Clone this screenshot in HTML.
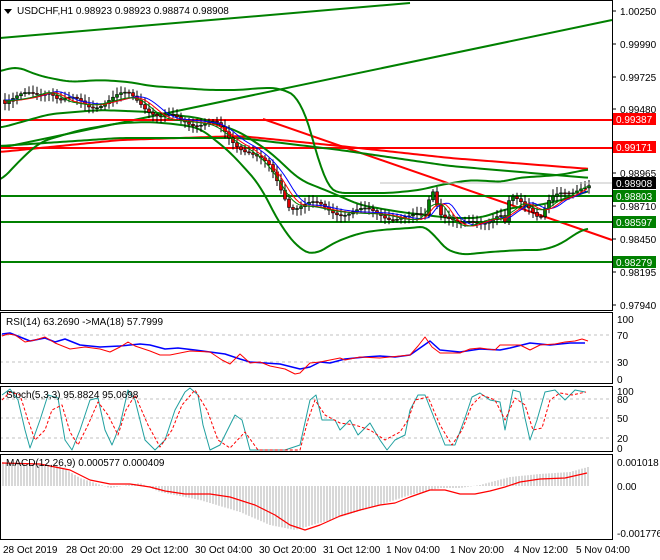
<!DOCTYPE html>
<html><head><meta charset="utf-8"><style>
body{margin:0;background:#fff;width:660px;height:560px;overflow:hidden}
svg{display:block}
text{font-family:"Liberation Sans",sans-serif;font-size:10px;fill:#000}
</style></head><body>
<svg id="s" width="660" height="560" xmlns="http://www.w3.org/2000/svg">
<rect width="660" height="560" fill="#fff"/>
<g id="main"></g>
<g stroke="#000" fill="none" stroke-width="1">
<rect x="0.5" y="0.5" width="612" height="310"/>
<rect x="0.5" y="312.5" width="612" height="71"/>
<rect x="0.5" y="386.5" width="612" height="65"/>
<rect x="0.5" y="454.5" width="612" height="85"/>
</g>
<g>
<path d="M4 9 L12 9 L8 14Z" fill="#000"/>
<text x="17" y="14">USDCHF,H1  0.98923 0.98923 0.98874 0.98908</text>
<text x="6" y="325">RSI(14) 63.2690  -&gt;MA(18) 57.7999</text>
<text x="6" y="398">Stoch(5,3,3) 95.8824 95.0698</text>
<text x="6" y="466">MACD(12,26,9) 0.000577 0.000409</text>
</g>
<g id="axis"></g>
<g>
<text x="3" y="553">28 Oct 2019</text><text x="66" y="553">28 Oct 20:00</text><text x="131" y="553">29 Oct 12:00</text><text x="195" y="553">30 Oct 04:00</text><text x="259" y="553">30 Oct 20:00</text><text x="323" y="553">31 Oct 12:00</text><text x="386" y="553">1 Nov 04:00</text><text x="450" y="553">1 Nov 20:00</text><text x="514" y="553">4 Nov 12:00</text><text x="576" y="553">5 Nov 04:00</text>
</g>
</svg>
<script>
const NS="http://www.w3.org/2000/svg",M=document.getElementById('main');
function el(t,a,p){const e=document.createElementNS(NS,t);for(const k in a)e.setAttribute(k,a[k]);(p||M).appendChild(e);return e;}
function pl(pts,c,w,extra){const a={points:pts.map(p=>p.join(',')).join(' '),fill:'none',stroke:c,'stroke-width':w,'stroke-linejoin':'round'};Object.assign(a,extra||{});return el('polyline',a);}
function interp(k,x){for(let i=0;i<k.length-1;i++){if(x>=k[i][0]&&x<=k[i+1][0]){const t=(x-k[i][0])/(k[i+1][0]-k[i][0]);return k[i][1]+t*(k[i+1][1]-k[i][1]);}}return x<k[0][0]?k[0][1]:k[k.length-1][1];}
function smooth(k){const o=[];for(let x=k[0][0];x<=k[k.length-1][0];x+=3){let s=0,n=0;for(let d=-9;d<=9;d+=3){s+=interp(k,x+d);n++;}o.push([x,s/n]);}return o;}
pl([[0,38],[410,3]],'#008000',2);
pl([[0,148],[612,20]],'#008000',2);
pl([[0,120],[612,120]],'#ff0000',2);
pl([[0,148],[612,148]],'#ff0000',2);
pl([[263,119],[612,240]],'#ff0000',2);
pl(smooth([[0,152],[120,140],[240,136],[340,146],[450,158],[590,169]]),'#ff0000',2);
pl(smooth([[0,146],[120,138],[240,138],[340,150],[450,166],[590,178]]),'#008000',2);
pl([[0,196],[612,196]],'#008000',2);
pl([[0,222],[612,222]],'#008000',2);
pl([[0,262],[612,262]],'#008000',2);
pl(smooth([[0,72],[15,66],[40,76],[70,82],[100,80],[130,82],[150,86],[180,88],[210,90],[240,90],[260,88],[280,88],[300,98],[312,135],[325,185],[335,193],[360,193],[390,193],[420,190],[440,185],[470,180],[505,182],[515,178],[560,175],[580,171],[590,169]]),'#008000',2);
pl(smooth([[0,182],[20,160],[40,142],[80,130],[120,123],[150,122],[175,124],[200,128],[230,152],[260,185],[280,225],[300,250],[315,255],[335,242],[360,233],[380,230],[410,228],[430,226],[440,246],[460,255],[490,252],[520,250],[545,250],[565,242],[580,230],[590,228]]),'#008000',2);
pl(smooth([[0,128],[50,114],[100,110],[150,112],[200,118],[240,132],[270,152],[300,180],[330,192],[360,205],[400,212],[450,218],[480,218],[510,208],[540,205],[570,198],[590,190]]),'#008000',2);
const K=[[5,100],[20,98],[35,95],[50,88],[60,100],[75,102],[90,105],[110,100],[130,95],[140,100],[160,118],[200,122],[215,125],[230,140],[250,150],[270,170],[290,205],[310,205],[330,210],[350,212],[380,213],[410,220],[425,215],[432,185],[440,210],[460,228],[480,220],[500,215],[505,225],[510,200],[530,205],[540,215],[550,200],[570,195],[580,185],[590,182]];
let prev=interp(K,3),ma1=[],ma2=[],ma3=[];
for(let x=5;x<=590;x+=4){let c=interp(K,x)+Math.sin(x*1.7)*4.5,o=prev;const hi=Math.min(o,c)-2-Math.abs(Math.sin(x*.9))*5,lo=Math.max(o,c)+2+Math.abs(Math.cos(x*.7))*5;
el('line',{x1:x,y1:hi,x2:x,y2:lo,stroke:'#000','stroke-width':1});
const up=c<o;el('rect',{x:x-1.5,y:Math.min(o,c),width:3,height:Math.max(1,Math.abs(o-c)),fill:up?'#008000':'#e00000',stroke:'#000','stroke-width':0.6});
ma1.push([x,interp(K,x-4)+1]);ma2.push([x,interp(K,x-8)+1]);ma3.push([x,interp(K,x-12)]);prev=c;}
pl(smooth(ma3),'#0000ff',1);pl(smooth(ma2),'#ff0000',1);pl(smooth(ma1),'#008000',1);
const A=document.getElementById('axis');
[[11,'1.00250'],[44,'0.99990'],[77,'0.99725'],[109,'0.99480'],[173,'0.98965'],[206,'0.98710'],[239,'0.98450'],[272,'0.98195'],[305,'0.97940']].forEach(t=>{el('line',{x1:612,y1:t[0],x2:616,y2:t[0],stroke:'#000'},A);const e=el('text',{x:620,y:t[0]+4},A);e.textContent=t[1];});
[[319,'100'],[335,'70'],[362,'30'],[379,'0'],[391,'100'],[399,'80'],[418,'50'],[438,'20'],[448,'0'],[462,'0.001018'],[486,'0.00'],[533,'-0.001776']].forEach(t=>{const e=el('text',{x:617,y:t[0]+4},A);e.textContent=t[1];});
pl([[380,183],[612,183]],'#c0c0c0',1);
[[119,'0.99387','#ff0000'],[147,'0.99171','#ff0000'],[183,'0.98908','#000'],[196,'0.98803','#008000'],[222,'0.98597','#008000'],[262,'0.98279','#008000']].forEach(l=>{el('rect',{x:613,y:l[0]-6,width:43,height:12,fill:l[2]},A);const e=el('text',{x:616,y:l[0]+4,style:'fill:#fff'},A);e.textContent=l[1];});
[335,362].forEach(y=>pl([[0,y],[612,y]],'#c0c0c0',1,{'stroke-dasharray':'3,3'}));
pl([[2,334],[10,333],[20,337],[30,341],[45,338],[55,342],[65,339],[80,345],[100,347],[120,346],[130,345],[140,344],[150,345],[165,349],[178,348],[195,350],[210,352],[225,354],[240,359],[250,362],[265,363],[280,364],[300,369],[310,367],[320,362],[330,363],[345,359],[365,357],[380,356],[395,357],[410,355],[420,348],[430,341],[440,350],[460,352],[480,349],[500,350],[510,348],[530,343],[550,345],[570,343],[585,343]],'#0000ff',1.5);
pl([[2,336],[8,334],[15,335],[25,342],[35,340],[45,337],[55,343],[70,349],[85,347],[100,349],[110,352],[120,347],[128,342],[135,346],[150,351],[160,355],[170,355],[190,351],[210,352],[222,360],[230,364],[240,354],[250,363],[260,362],[270,366],[285,369],[295,374],[300,373],[310,363],[320,362],[330,360],[340,358],[345,360],[360,357],[380,358],[400,356],[410,355],[418,346],[425,337],[432,347],[440,353],[460,353],[470,349],[480,348],[495,350],[500,345],[520,345],[530,350],[540,345],[555,344],[565,342],[575,341],[582,339],[588,341]],'#ff0000',1);
[399,418,438].forEach(y=>pl([[0,y],[612,y]],'#c0c0c0',1,{'stroke-dasharray':'3,3'}));
pl([[2,395],[10,389],[18,400],[25,430],[30,448],[40,420],[48,395],[58,398],[65,440],[72,450],[80,430],[90,400],[98,398],[105,430],[112,445],[120,425],[128,390],[135,400],[145,440],[155,450],[165,440],[175,410],[185,392],[190,388],[198,395],[203,425],[210,450],[220,445],[235,415],[242,420],[250,450],[265,450],[285,450],[300,445],[310,400],[316,395],[322,420],[335,420],[340,430],[350,420],[358,435],[370,423],[380,440],[387,450],[395,440],[405,435],[410,410],[418,395],[425,395],[435,420],[445,445],[455,445],[465,418],[472,397],[480,393],[490,400],[500,402],[505,430],[513,390],[520,392],[525,418],[530,440],[537,420],[545,392],[555,390],[565,400],[575,390],[585,392]],'#20a0a0',1);
pl([[2,400],[10,392],[20,395],[28,420],[35,440],[45,430],[52,410],[62,405],[70,432],[78,445],[88,425],[98,402],[108,415],[118,435],[126,410],[135,395],[148,425],[160,447],[172,430],[182,405],[195,390],[207,410],[218,440],[230,448],[245,432],[258,450],[300,450],[308,420],[315,400],[325,415],[340,423],[355,425],[370,430],[385,440],[400,432],[408,420],[415,400],[428,397],[440,425],[452,445],[462,430],[472,405],[482,395],[495,400],[505,420],[515,398],[525,405],[533,430],[542,428],[550,400],[560,393],[572,395],[586,392]],'#ff0000',1,{'stroke-dasharray':'3,2'});
for(let x=3;x<=588;x+=3){const v=interp([[0,462],[60,466],[80,478],[110,488],[140,483],[160,492],[200,500],[240,512],[270,525],[295,530],[330,520],[380,505],[410,495],[440,488],[460,488],[480,485],[510,477],[540,474],[570,472],[588,467]],x);
el('line',{x1:x,y1:486,x2:x,y2:v,stroke:'#b0b0b0','stroke-width':1});}
pl([[2,463],[40,464],[70,470],[90,480],[110,484],[130,484],[150,487],[165,491],[185,494],[210,494],[230,497],[255,505],[275,515],[290,525],[305,530],[320,525],[340,516],[360,510],[380,505],[395,503],[410,497],[430,490],[445,490],[460,494],[475,494],[490,491],[505,487],[520,482],[540,479],[565,478],[587,473]],'#ff0000',1.2);
</script>
</body></html>
